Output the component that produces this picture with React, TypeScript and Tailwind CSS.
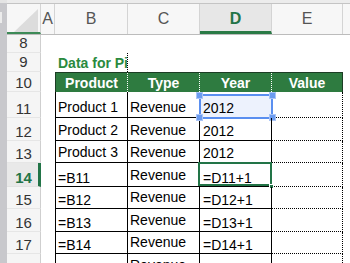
import React from 'react'

type Row = {
  n: number
  h: string
  b?: string
  c?: string
  d?: string
  cSolid?: boolean
  low?: boolean
}

const rows: Row[] = [
  { n: 11, h: 'h-[26px]', b: 'Product 1', c: 'Revenue', d: '2012' },
  { n: 12, h: 'h-[23px]', b: 'Product 2', c: 'Revenue', d: '2012', cSolid: true },
  { n: 13, h: 'h-[22px]', b: 'Product 3', c: 'Revenue', d: '2012', cSolid: true },
  { n: 14, h: 'h-[24px]', b: '=B11', c: 'Revenue', d: '=D11+1', low: true },
  { n: 15, h: 'h-[22px]', b: '=B12', c: 'Revenue', d: '=D12+1', low: true },
  { n: 16, h: 'h-[23px]', b: '=B13', c: 'Revenue', d: '=D13+1', low: true },
  { n: 17, h: 'h-[22px]', b: '=B14', c: 'Revenue', d: '=D14+1', low: true },
  { n: 18, h: 'h-[23px]', b: '=B15', c: 'Revenue', d: '=D15+1', low: true },
]

function RowLabel({ n, active, pb = 'pb-0' }: { n: number; active?: boolean; pb?: string }) {
  return (
    <div
      className={`${pb} ${
        active
          ? 'w-[34px] shrink-0 flex items-end justify-center bg-[#e9e9e9] border-r-[3px] border-[#227447] border-b border-b-[#e2e2e2] text-[#227447] font-bold text-[15px] leading-[16px]'
          : 'w-[34px] shrink-0 flex items-end justify-center bg-[#f5f5f5] border-r border-[#cfcfcf] border-b border-b-[#e6e6e6] text-[#333] text-[15px] leading-[16px]'
      }`}
    >
      <span className={active ? 'pl-[2px]' : ''}>{n}</span>
    </div>
  )
}

function HeadCol({ label, w, active }: { label: string; w: string; active?: boolean }) {
  return (
    <div
      className={`${w} shrink-0 flex items-center justify-center border-r border-[#d4d4d4] ${
        active
          ? 'bg-[#e7e7e7] border-b-[3px] border-b-[#2a7a46] text-[#227447] font-bold pt-[3px]'
          : 'text-[#555]'
      } text-[16px]`}
    >
      {label}
    </div>
  )
}

export default function App() {
  return (
    <div className="w-[350px] h-[263px] overflow-hidden bg-white flex font-['Liberation_Sans',Arial,sans-serif]">
      {/* left window strip */}
      <div className="w-[7px] shrink-0 bg-[#c8c8cc] flex flex-col">
        <div className="h-[3px] bg-[#e4e4e4]" />
        <div className="mt-[9px] h-[11px] w-[2px] bg-[#ececec]" />
      </div>

      <div className="flex-1 flex flex-col min-w-0">
        <div className="h-[4px] shrink-0 bg-[#ececec] border-b border-[#c4c4c4]" />

        {/* column header */}
        <div className="h-[31px] shrink-0 flex bg-[#f7f7f7] border-b border-[#bcbcbc]">
          <div className="w-[34px] shrink-0 relative border-r border-[#d4d4d4] border-b-2 border-b-[#3d8a57]">
            <svg className="absolute left-[7px] top-[5px]" width="24" height="23" viewBox="0 0 24 23">
              <polygon points="0,23 24,23 24,0" fill="#dcdcdc" />
            </svg>
          </div>
          <HeadCol label="A" w="w-[14px]" />
          <HeadCol label="B" w="w-[73px]" />
          <HeadCol label="C" w="w-[72px]" />
          <HeadCol label="D" w="w-[72px]" active />
          <HeadCol label="E" w="w-[71px]" />
          <div className="flex-1" />
        </div>

        {/* row 8 */}
        <div className="h-[18px] shrink-0 flex">
          <RowLabel n={8} pb="pb-[1px]" />
        </div>

        {/* row 9 */}
        <div className="h-[19px] shrink-0 flex">
          <RowLabel n={9} pb="pb-[1px]" />
          <div className="w-[14px] shrink-0" />
          <div className="w-[73px] shrink-0 border-r border-dotted border-black overflow-hidden whitespace-nowrap flex items-end pl-[3px] pb-[1px] text-[14px] leading-[16px] font-bold text-[#2a8a3e]">
            Data for Pivot
          </div>
        </div>

        {/* row 10: table header */}
        <div className="h-[20px] shrink-0 flex">
          <RowLabel n={10} pb="pb-0" />
          <div className="w-[14px] shrink-0" />
          <div className="flex border-l border-t border-r border-[#1c3d25] bg-[#2e7b40] text-white font-bold text-[14px] leading-[16px]">
            <div className="w-[72px] flex items-center justify-center border-r border-dotted border-white pt-[1px]">Product</div>
            <div className="w-[72px] flex items-center justify-center border-r border-dotted border-white pt-[1px]">Type</div>
            <div className="w-[72px] flex items-center justify-center border-r border-dotted border-white pt-[1px]">Year</div>
            <div className="w-[70px] flex items-center justify-center pt-[1px]">Value</div>
          </div>
        </div>

        {rows.map((r) => (
          <div key={r.n} className={`${r.h} shrink-0 flex`}>
            <RowLabel n={r.n} active={r.n === 14} />
            <div className="w-[14px] shrink-0" />
            <div
              className={`w-[73px] shrink-0 border-l border-black border-r border-r-dotted border-b border-b-dotted border-b-black flex items-end pl-[2px] text-[14px] leading-[16px] text-black whitespace-nowrap overflow-hidden ${
                r.low ? 'pb-0' : 'pb-[2px]'
              }`}
            >
              {r.b}
            </div>
            <div
              className={`w-[72px] shrink-0 border-r border-black border-b border-b-dotted flex items-end pl-[2px] text-[14px] leading-[16px] text-black whitespace-nowrap overflow-hidden ${
                r.cSolid ? 'border-r-solid' : 'border-r-dotted'
              } ${r.low ? 'pb-[3px]' : 'pb-[2px]'}`}
            >
              {r.c}
            </div>
            <div
              className={`w-[72px] shrink-0 relative border-r border-r-dotted border-black border-b border-b-dotted flex items-end pl-[3px] text-[14px] leading-[16px] text-black whitespace-nowrap ${
                r.low ? 'pb-0' : 'pb-[1px]'
              }`}
            >
              {r.n === 11 && (
                <>
                  <div className="absolute -left-[1px] top-[2px] w-[74px] h-[25px] border-2 border-[#5a8ff0] bg-[#edf2fd]" />
                  <div className="absolute -left-[4px] top-0 w-[7px] h-[7px] bg-[#6b9bef] border border-[#a9c4f6]" />
                  <div className="absolute -right-[5px] top-0 w-[7px] h-[7px] bg-[#6b9bef] border border-[#a9c4f6]" />
                  <div className="absolute -left-[4px] -bottom-[4px] w-[7px] h-[7px] bg-[#6b9bef] border border-[#a9c4f6]" />
                  <div className="absolute -right-[5px] -bottom-[4px] w-[7px] h-[7px] bg-[#6b9bef] border border-[#a9c4f6]" />
                </>
              )}
              {r.n === 14 && (
                <>
                  <div className="absolute -left-[2px] -top-[1px] w-[74px] h-[24px] border-2 border-[#227447]" />
                  <div className="absolute -right-[3px] -bottom-[3px] w-[5px] h-[5px] bg-[#227447] border border-white" />
                </>
              )}
              <span className="relative">{r.d}</span>
            </div>
            <div className="w-[71px] shrink-0 border-r border-dotted border-black border-b" />
          </div>
        ))}
      </div>
    </div>
  )
}
